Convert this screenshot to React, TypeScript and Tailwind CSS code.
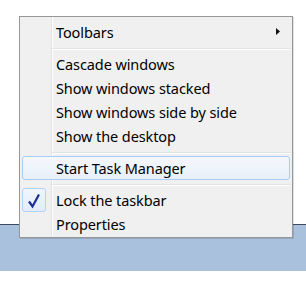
import React from "react";

const font = { fontFamily: '"Noto Sans", "Open Sans", sans-serif' };

function Item({ label, highlight, checked, submenu }: { label: string; highlight?: boolean; checked?: boolean; submenu?: boolean }) {
  return (
    <div
      className={
        "relative flex h-[24px] items-center mx-[2px] pl-[34px] rounded-[3px] border text-[14.5px] tracking-[-0.1px] leading-[24px] text-[#000] " +
        (highlight
          ? "border-[#a8cdf6] bg-[linear-gradient(to_bottom,#f4f8fd,#e8eff9)]"
          : "border-transparent")
      }
    >
      {checked && (
        <div className="absolute left-[-1px] top-[-1px] w-[24px] h-[24px] rounded-[3px] border border-[#b2d1f6] bg-[linear-gradient(to_bottom,#f1f6fd,#e3ecf9)]">
          <svg width="24" height="24" viewBox="0 0 24 24" className="absolute left-[-1px] top-[-1px]">
            <path d="M7 13.5 L10.5 18.5 L17 6.5" fill="none" stroke="#1b2b99" strokeWidth="2.2" strokeLinejoin="miter" />
          </svg>
        </div>
      )}
      <span className="ml-[-1px]">{label}</span>
      {submenu && (
        <svg width="4" height="7" viewBox="0 0 4 7" className="absolute right-[9px] top-[7px]">
          <path d="M0 0 L4 3.5 L0 7 Z" fill="#111" />
        </svg>
      )}
    </div>
  );
}

function Sep() {
  return (
    <div className="h-[8px] pt-[4px] pl-[32px] pr-[1px]">
      <div className="h-px bg-[#e2e3e3]" />
      <div className="h-px bg-white" />
    </div>
  );
}

export default function App() {
  return (
    <div className="relative w-[306px] h-[283px] bg-white overflow-hidden" style={font}>
      <div className="flex flex-col">
        <div className="h-[224px]" />
        <div className="h-px bg-[#3d4a5c]" />
        <div className="h-[46px] bg-[#a9c1dc]" />
      </div>
      <div className="absolute left-[19px] top-[16px] w-[274px] h-[222px] border border-[#979797] shadow-[1px_1px_0_rgba(0,0,0,0.12)] bg-[linear-gradient(to_right,#f0f0f0_31px,#e2e3e3_31px,#e2e3e3_32px,#ffffff_32px,#ffffff_33px,#f0f0f0_33px)]">
        <div className="flex flex-col pt-[3px]">
          <Item label="Toolbars" submenu />
          <Sep />
          <Item label="Cascade windows" />
          <Item label="Show windows stacked" />
          <Item label="Show windows side by side" />
          <Item label="Show the desktop" />
          <Sep />
          <Item label="Start Task Manager" highlight />
          <Sep />
          <Item label="Lock the taskbar" checked />
          <Item label="Properties" />
        </div>
      </div>
    </div>
  );
}
